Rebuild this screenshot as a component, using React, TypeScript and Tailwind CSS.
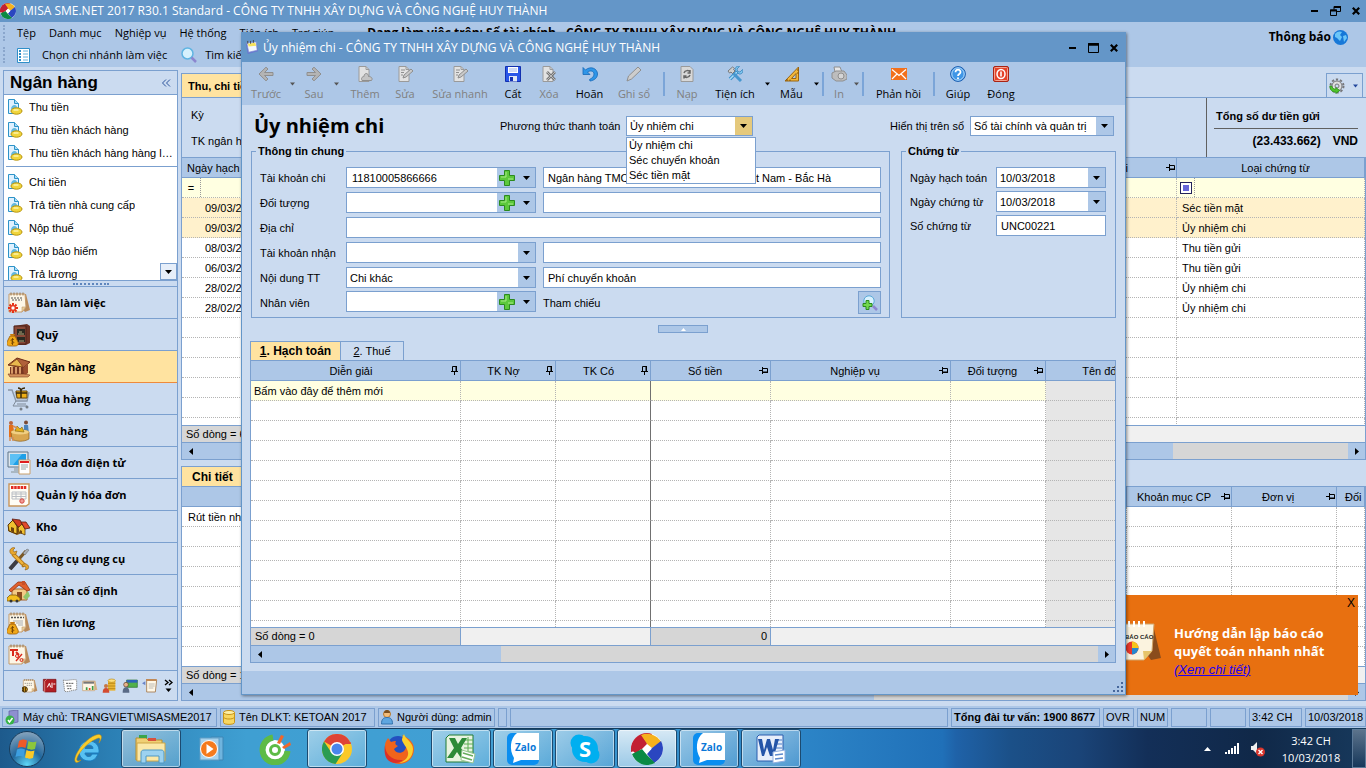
import type { ReactNode } from 'react'
import clsx from 'clsx'

/* ---------- shared icons ---------- */

function Caret({ className = 'text-black' }: { className?: string }) {
  return (
    <svg width="7" height="4" viewBox="0 0 7 4" className={className} aria-hidden="true">
      <path d="M0 0h7L3.5 4z" fill="currentColor" />
    </svg>
  )
}

function SideArrow({ flip = false }: { flip?: boolean }) {
  return (
    <svg width="4" height="7" viewBox="0 0 4 7" aria-hidden="true">
      <path d={flip ? 'M4 0v7L0 3.5z' : 'M0 0v7l4-3.5z'} fill="#000" />
    </svg>
  )
}

function Pin({ side = false }: { side?: boolean }) {
  return side ? (
    <svg width="9" height="7" viewBox="0 0 9 7" className="shrink-0" aria-hidden="true">
      <path d="M0 3.5h3M3.5 0v7M4 1.5h4.5v3.5H4M4 5.5h5" fill="none" stroke="#000" />
    </svg>
  ) : (
    <svg width="7" height="9" viewBox="0 0 7 9" className="shrink-0" aria-hidden="true">
      <path d="M1.5 5V.5h3.5V5M5.5 0v5M0 5.5h7M3.5 6v3" fill="none" stroke="#000" />
    </svg>
  )
}

function Logo({ size }: { size: number }) {
  return (
    <svg width={size} height={size} viewBox="0 0 32 32" aria-hidden="true">
      <circle cx="16" cy="16" r="16" fill="#fff" />
      <path d="M16 0A16 16 0 0 0 0 16l5 5L16 10l5-9A16 16 0 0 0 16 0z" fill="#c22033" />
      <path d="M10 2A16 16 0 0 1 30 9L21 15l-5-4z" fill="#f5b21d" />
      <path d="M30 8A16 16 0 0 1 23 30L16 21l5-6z" fill="#2a46c0" />
      <path d="M24 30A16 16 0 0 1 1 21l10-5 5 6z" fill="#0a8a44" />
      <path d="M10 3A16 16 0 0 0 0 19l11-3 5-5z" fill="#c22033" />
      <path d="m16 11.500 4.500 4.500-4.500 4.500-4.500-4.500z" fill="#fff" />
    </svg>
  )
}

function DocCoin() {
  return (
    <svg width="16" height="16" viewBox="0 0 16 16" className="shrink-0" aria-hidden="true">
      <path d="M1.500.5h6l4 4v10h-10z" fill="#dff1ff" stroke="#2d93c8" />
      <path d="M7.500.5v4h4" fill="#a9dcf5" stroke="#2d93c8" />
      <path d="M4 10.500c0-3 1.500-4.500 3.500-4.500S10 8 11 9.500z" fill="#63b8de" />
      <ellipse cx="9.500" cy="12" rx="5.500" ry="3.200" fill="#f0d53c" stroke="#b8940f" />
      <path d="M6.500 11h5" stroke="#fff7b0" strokeWidth="1.400" />
    </svg>
  )
}

function Plus({ size = 16 }: { size?: number }) {
  return (
    <svg width={size} height={size} viewBox="0 0 16 16" aria-hidden="true">
      <path d="M5.500.5h5v5h5v5h-5v5h-5v-5h-5v-5h5z" fill="#5cc83c" stroke="#2b8a1e" />
      <path d="M7 2v5H2M9 9h5" fill="none" stroke="#a6ea86" />
    </svg>
  )
}

/* ---------- navigation icons ---------- */

// calendar sheet with a curled corner, used as the base of several modules
function Sheet({ children }: { children?: ReactNode }) {
  return (
    <>
      <path d="M5 3h14l4 16-5 2z" fill="#b98a5a" />
      <path d="M2 3h16l1 13-4 5H2z" fill="#fdf6e6" stroke="#c39a6b" />
      <path d="M19 16h-4v5z" fill="#e9cf9c" stroke="#c39a6b" strokeWidth=".6" />
      <path d="M4 1.500v3M7 1.500v3M10 1.500v3M13 1.500v3M16 1.500v3" stroke="#9a7448" />
      {children}
    </>
  )
}

function MoneyBag() {
  return (
    <>
      <path d="M3 13h5l3 6c1 3-1 4-3 4H3c-2 0-4-1-3-4z" fill="#f0a818" stroke="#9a5c08" strokeWidth=".8" />
      <path d="M3 11h5l-1 2.500H4z" fill="#c67b10" />
      <path d="M7 16.500c-3-1-4 1.500-1.500 2s1 2.500-1.500 1.500M5.500 15v7" fill="none" stroke="#6b3c00" strokeWidth=".8" />
    </>
  )
}

const NAV_ART: Record<string, ReactNode> = {
  desk: (
    <Sheet>
      <path d="M4 7h12M5 9h10" stroke="#555" strokeWidth="1.200" strokeDasharray="2 1" />
      <path d="M6 12v10M1 17h10M2.500 13.500l7 7M9.500 13.500l-7 7" stroke="#e63216" strokeWidth="2" />
      <circle cx="6" cy="17" r="2.200" fill="#fff" stroke="#e63216" />
    </Sheet>
  ),
  safe: (
    <>
      <path d="m7 3 13-2 3 2v17l-4 2H7z" fill="#6c3325" />
      <path d="M7 3h12v18H7z" fill="#8a4a38" stroke="#4a2018" />
      <path d="M10 6h8v6h-8zM10 14h8v5h-8z" fill="#2b2a22" />
      <path d="M11 11h6M12 9h3M12 18h5" stroke="#b4a878" />
      <MoneyBag />
    </>
  ),
  bank: (
    <>
      <path d="m1 10 9-7 13 4-7 6z" fill="#b0603a" stroke="#6e2c17" />
      <path d="m2 10 8-6 6 8z" fill="#e8b84e" stroke="#8c4a20" />
      <path d="M3 12h14v7H3z" fill="#783722" />
      <path d="M5 12v7M9 12v7M13 12v7" stroke="#e3a570" strokeWidth="1.800" />
      <path d="m16 13 5-4v9l-4 3z" fill="#9a4c2e" />
      <path d="M1 19h16l6 1-2 2H3z" fill="#d5905c" stroke="#7b3b20" strokeWidth=".6" />
    </>
  ),
  cart: (
    <>
      <path d="M1 3h4l4 11h11l2-9" fill="none" stroke="#8a97a6" strokeWidth="1.400" />
      <path d="M8 5h13l-2 7h-9zM10 8h10M12 5v7M16 5v7" fill="none" stroke="#a5afba" />
      <path d="M9 4h11v7H10z" fill="#edae15" stroke="#6b4708" />
      <path d="M14 2v9M9 6h11M11 1c3 0 3 3 3 3s0-3 4-3" fill="none" stroke="#3a2a0a" strokeWidth="1.500" />
      <path d="M9 14 6 19h14M10 17h9" fill="none" stroke="#7e8a98" />
      <circle cx="14" cy="22" r="1.500" fill="#777f88" />
      <circle cx="20" cy="20" r="1.500" fill="#777f88" />
    </>
  ),
  sell: (
    <>
      <circle cx="4" cy="4" r="2" fill="#b9643c" />
      <path d="M2 6h4l2 12H2z" fill="#e46f1a" />
      <circle cx="19" cy="3.500" r="2" fill="#7b4a34" />
      <path d="M17 6h4l1 9h-5z" fill="#4a82bb" />
      <path d="M4 13c2-3 15-3 18 0v7c-5 3-13 3-17 0z" fill="#d8a650" stroke="#8e6320" strokeWidth=".7" />
      <ellipse cx="13" cy="13" rx="9" ry="2.500" fill="#f1cf82" />
      <path d="m8 12 2-5 3 3 2-2 2 5z" fill="#e3b11a" stroke="#7e6210" strokeWidth=".6" />
      <path d="M6 7l4 2M3 18v4M6 18v4" stroke="#d88c54" strokeWidth="1.500" />
    </>
  ),
  screen: (
    <>
      <path d="M1 1h20v15H1z" fill="#dce5ec" stroke="#5f7587" />
      <path d="M3 3h16v11H3z" fill="#1ea0e8" />
      <path d="M3 3h12L6 14H3z" fill="#5cc0f4" />
      <path d="M7 17h6v3h3v2H4v-2h3z" fill="#a9b7c2" />
      <path d="M12 9h11v14H12z" fill="#fff" stroke="#caa06a" />
      <path d="M13 11h9" stroke="#e02020" strokeWidth="2" />
      <path d="M14 14h7M14 16h7M14 18h5" stroke="#9aa" />
    </>
  ),
  invoice: (
    <>
      <path d="M2 1h20v20l-3 2H2z" fill="#fffdf5" stroke="#c9955a" strokeWidth="1.400" />
      <path d="M4 4.500h16" stroke="#e22c22" strokeWidth="3" strokeDasharray="2.500 .7" />
      <path d="M5 9h14v7H5zM5 11h14M5 13.500h14M9 9v7M14 9v7" fill="none" stroke="#b9bec4" />
      <circle cx="15" cy="18" r="2.200" fill="#f09a94" stroke="#d34a44" />
    </>
  ),
  stock: (
    <>
      <path d="m1 10 5-5 7 1 2 6v6l-5 2-9-4z" fill="#8a5a12" />
      <path d="m1 10 5-5 4 6v8l-8-3z" fill="#f0c030" stroke="#593508" />
      <path d="m5 4 8 1 3 6-5 1z" fill="#cf3c20" stroke="#5a1a0c" strokeWidth=".8" />
      <path d="m11 13 4-4 3 5v6l-6-3z" fill="#f0c030" stroke="#593508" strokeWidth=".8" />
      <path d="m14 7 5 0 4 6-5 1z" fill="#e14a2c" stroke="#5a1a0c" strokeWidth=".8" />
      <path d="M4 16v-4l3 1v5M13 18v-3l2 1v3" fill="#6e430c" />
    </>
  ),
  tools: (
    <>
      <path d="M3 22 19 4" stroke="#7c5a28" strokeWidth="3.200" />
      <path d="M3 22 10 14" stroke="#3c3c44" strokeWidth="4" />
      <path d="m16 6 4-4 2 1-4 5z" fill="#aab0b8" stroke="#666" strokeWidth=".5" />
      <path d="M6 7 18 19" stroke="#b37718" strokeWidth="4" />
      <path d="M6 7 18 19" stroke="#f0b43c" strokeWidth="2.400" />
      <path d="M3 3c-1 4 3 6 6 4l1-3-3 1-1-2 2-2C6 0 4 1 3 3zM21 22c2-3-1-6-5-5l-1 3 3-1 1 2-1 2z" fill="#e8a72e" stroke="#8b5c14" strokeWidth=".6" />
    </>
  ),
  asset: (
    <>
      <path d="M5 10h15v11H5z" fill="#f3c985" stroke="#a5622a" />
      <path d="M2 11 11 3h7l5 8-3 1-8-6-8 7z" fill="#e2602c" stroke="#963414" strokeWidth=".8" />
      <path d="M15 2h3v4h-3z" fill="#c8502a" />
      <path d="M10 13h5v8h-5z" fill="#8b4b1f" />
      <path d="M0 19l3-3h6l4 3v3H0z" fill="#f4bd1e" stroke="#7e5b10" strokeWidth=".8" />
      <circle cx="4" cy="22" r="1.500" fill="#333" />
      <circle cx="10" cy="22" r="1.500" fill="#333" />
      <path d="m16 18 5-6 2 5-4 4z" fill="#8fc66c" />
    </>
  ),
  wage: (
    <Sheet>
      <path d="M4 6.500h13" stroke="#555" strokeWidth="1.400" strokeDasharray="2 1" />
      <path d="M6 10h10M9 12h7M11 14h5" stroke="#a9aeb5" />
      <MoneyBag />
    </Sheet>
  ),
  tax: (
    <Sheet>
      <path d="M3 7h8M6 7v6M9 9l3 3" stroke="#d92a1c" strokeWidth="2" />
      <path d="m9 18 6-7" stroke="#d92a1c" strokeWidth="1.400" />
      <circle cx="10" cy="13" r="1.500" fill="none" stroke="#d92a1c" />
      <circle cx="14.500" cy="17" r="1.500" fill="none" stroke="#d92a1c" />
    </Sheet>
  ),
  bee: (
    <Sheet>
      <path d="M4 8h12M7 11h9" stroke="#777" strokeDasharray="2 1" />
      <circle cx="4" cy="17" r="4" fill="#e2a01c" stroke="#3b2a08" strokeWidth="1.500" />
      <path d="M2 14v6M5 14v6" stroke="#3b2a08" strokeWidth="1.500" />
    </Sheet>
  ),
  red: (
    <>
      <path d="M2 2h19v19H4l-2-2z" fill="#b11e24" stroke="#761216" />
      <path d="M4 21V5l3-3" fill="none" stroke="#e3b5a8" />
      <path d="M8 14l3-6 2 6M15 7v8M17 9h3" stroke="#fff" strokeWidth="1.500" fill="none" />
    </>
  ),
  list: (
    <>
      <path d="M2 3c6 2 14-2 20 0v15c-6-1-12 4-18 2z" fill="#fff" stroke="#8a8a8a" strokeWidth="1.400" strokeDasharray="2 1" />
      <path d="M6 8h12M7 12h8M8 16h6" stroke="#555" strokeWidth="1.500" strokeDasharray="3 1" />
    </>
  ),
  chart: (
    <>
      <path d="M2 4h18l3 14H4z" fill="#d6b286" />
      <path d="M1 5h18v14H1z" fill="#fdf6e6" stroke="#c39a6b" />
      <path d="M2 7h16" stroke="#777" strokeWidth="3" />
      <path d="M7 18v-4M16 18v-6" stroke="#3a9b48" strokeWidth="2.500" />
      <path d="M11.500 18v-3" stroke="#e24b26" strokeWidth="2.500" />
    </>
  ),
  coins: (
    <>
      <path d="M9 4h11v15H9z" fill="#eab534" />
      <path d="M9 8h11M9 12h11M9 16h11" stroke="#a7780e" />
      <ellipse cx="14.500" cy="4" rx="5.500" ry="2.500" fill="#ffe07a" stroke="#b98a1a" />
      <circle cx="6" cy="12" r="3" fill="#c77745" />
      <path d="M1 22c0-5 2-7 5-7s5 2 5 7z" fill="#d34b30" />
    </>
  ),
  shop: (
    <>
      <path d="M7 3h16v11H7z" fill="#52b04a" stroke="#27702a" />
      <path d="M7 5h16" stroke="#2d63b8" strokeWidth="4" />
      <circle cx="6" cy="10" r="3.500" fill="#e7b48c" stroke="#5b3a28" />
      <path d="M1 22c0-6 2-8 5-8s5 2 5 8z" fill="#596a86" />
    </>
  ),
  scroll: (
    <>
      <path d="M7 3h15l-2 18H7z" fill="#fff8e8" stroke="#a9825a" strokeWidth="1.400" />
      <path d="M6 3h16" stroke="#c08a58" strokeWidth="3" />
      <path d="M10 9h9M10 12h9M10 15h7" stroke="#9a9a9a" />
      <path d="m0 8 5-3v6z" fill="#6a84c8" />
    </>
  ),
}

function NavIcon({ art, size = 24 }: { art: string; size?: number }) {
  return (
    <svg width={size} height={size} viewBox="0 0 24 24" className="shrink-0" aria-hidden="true">
      {NAV_ART[art]}
    </svg>
  )
}

const TASKS_IN = ['Thu tiền', 'Thu tiền khách hàng', 'Thu tiền khách hàng hàng loạt']
const TASKS_OUT = ['Chi tiền', 'Trả tiền nhà cung cấp', 'Nộp thuế', 'Nộp bảo hiểm', 'Trả lương']

const MODULES = [
  { name: 'Bàn làm việc', art: 'desk' },
  { name: 'Quỹ', art: 'safe' },
  { name: 'Ngân hàng', art: 'bank', active: true },
  { name: 'Mua hàng', art: 'cart' },
  { name: 'Bán hàng', art: 'sell' },
  { name: 'Hóa đơn điện tử', art: 'screen' },
  { name: 'Quản lý hóa đơn', art: 'invoice' },
  { name: 'Kho', art: 'stock' },
  { name: 'Công cụ dụng cụ', art: 'tools' },
  { name: 'Tài sản cố định', art: 'asset' },
  { name: 'Tiền lương', art: 'wage' },
  { name: 'Thuế', art: 'tax' },
]

function TaskLink({ name }: { name: string }) {
  return (
    <li>
      <a href="#" className="flex h-[23px] items-center gap-1.5 pr-1 pl-[3px]">
        <DocCoin />
        <span className="truncate">{name}</span>
      </a>
    </li>
  )
}

function Sidebar() {
  return (
    <aside className="flex w-[175px] shrink-0 flex-col border border-[#7ba0cf] bg-[#cbdbf0]">
      <div className="flex h-6 shrink-0 items-center justify-between border-b border-[#7ba0cf] px-1.5">
        <h2 className="text-[17px] leading-6 font-bold">Ngân hàng</h2>
        <button aria-label="Thu gọn" className="text-[#2d559c]">
          <svg width="9" height="8" viewBox="0 0 9 8" aria-hidden="true">
            <path d="M4 .5.500 4 4 7.500M8 .5 4.500 4 8 7.500" fill="none" stroke="currentColor" />
          </svg>
        </button>
      </div>
      <div className="relative h-[185px] shrink-0 overflow-hidden bg-white">
        <ul>
          {TASKS_IN.map((t) => <TaskLink key={t} name={t} />)}
        </ul>
        <hr className="mt-0.5 mb-[3px] ml-0.5 border-[#7ba0cf]" />
        <ul>
          {TASKS_OUT.map((t) => <TaskLink key={t} name={t} />)}
        </ul>
        <button aria-label="Cuộn xuống" className="absolute right-0 bottom-0 flex h-[17px] w-[17px] items-center justify-center border border-[#7ba0cf] bg-[#e6eef9]">
          <Caret />
        </button>
      </div>
      <div className="flex h-[7px] shrink-0 items-center justify-center border-y border-[#7ba0cf]">
        <span className="w-9 border-t-2 border-dotted border-[#5f86bd]" />
      </div>
      <nav>
        {MODULES.map((m) => (
          <button
            key={m.name}
            className={clsx(
              'flex h-8 w-full items-center gap-[5px] border-b pl-[3px] text-left font-["Open_Sans",sans-serif] text-[11px] font-bold',
              m.active ? 'border-[#ee8a3c] bg-[#ffe3a0]' : 'border-[#7ba0cf]',
            )}
          >
            <NavIcon art={m.art} />
            {m.name}
          </button>
        ))}
      </nav>
      <div className="flex flex-1 items-center justify-end gap-1 pr-1">
        {['bee', 'red', 'list', 'chart', 'coins', 'shop', 'scroll'].map((art) => (
          <button key={art} aria-label={art}><NavIcon art={art} size={16} /></button>
        ))}
        <button aria-label="Thêm phân hệ" className="ml-0.5">
          <svg width="9" height="14" viewBox="0 0 9 14" aria-hidden="true">
            <path d="m1 1 3 2.500L1 6M5 1l3 2.500L5 6" fill="none" stroke="#000" strokeWidth="1.400" />
            <path d="M1.500 9.500h6l-3 3.500z" />
          </svg>
        </button>
      </div>
    </aside>
  )
}

/* ---------- main window ---------- */

function TitleButtons({ restore = false }: { restore?: boolean }) {
  return (
    <div className="ml-auto flex items-center gap-[11px]">
      <button aria-label="Thu nhỏ">
        <svg width="8" height="10" viewBox="0 0 8 10"><path d="M0 5h7" stroke="#000" strokeWidth="2" /></svg>
      </button>
      <button aria-label="Phóng to">
        {restore ? (
          <svg width="11" height="10" viewBox="0 0 11 10" fill="none" stroke="#000">
            <path d="M.5 4h6v5.500h-6zM4 3.500v-3h6.500v5H7" /><path d="M0 4.500h7M4 1h7" strokeWidth="2" />
          </svg>
        ) : (
          <svg width="11" height="10" viewBox="0 0 11 10" fill="none" stroke="#000">
            <path d="M.5.500h10v9H.5z" /><path d="M0 1.500h11" strokeWidth="2.500" />
          </svg>
        )}
      </button>
      <button aria-label="Đóng cửa sổ">
        <svg width="8" height="8" viewBox="0 0 8 8"><path d="m.8.8 6.400 6.400M7.200.8.8 7.200" stroke="#000" strokeWidth="2.200" /></svg>
      </button>
    </div>
  )
}

function Scrollbar({ thumb }: { thumb: string }) {
  return (
    <div className="flex h-[17px] shrink-0 items-center border-t border-[#7ba0cf] bg-[#d6d6d6]">
      <button aria-label="Cuộn trái" className="flex h-full w-[17px] shrink-0 items-center justify-center bg-[#adc7e7]">
        <SideArrow flip />
      </button>
      <span className={clsx('h-full bg-[#adc7e7]', thumb)} />
      <button aria-label="Cuộn phải" className="ml-auto flex h-full w-[17px] shrink-0 items-center justify-center bg-[#adc7e7]">
        <SideArrow />
      </button>
    </div>
  )
}

const VOUCHERS = [
  { date: '09/03/2018', type: 'Séc tiền mặt', marked: true },
  { date: '09/03/2018', type: 'Ủy nhiệm chi', marked: true },
  { date: '08/03/2018', type: 'Thu tiền gửi' },
  { date: '06/03/2018', type: 'Thu tiền gửi' },
  { date: '28/02/2018', type: 'Ủy nhiệm chi' },
  { date: '28/02/2018', type: 'Ủy nhiệm chi' },
  { date: '', type: '' },
  { date: '', type: '' },
  { date: '', type: '' },
  { date: '', type: '' },
  { date: '', type: '' },
  { date: '', type: '' },
]

const TH = 'h-5 border-r border-b border-[#7ba0cf] bg-[#adc7e7] p-0 font-normal'
const TD = 'h-5 border-r border-b border-dotted border-[#b4b4b4] p-0'

function VoucherTable() {
  return (
    <table className="w-full table-fixed border-separate border-spacing-0">
      <colgroup>
        <col className="w-[100px]" />
        <col />
        <col className="w-[140px]" />
        <col className="w-[188px]" />
      </colgroup>
      <thead>
        <tr>
          <th className={clsx(TH, 'pl-[5px] text-left whitespace-nowrap')}>Ngày hạch toán</th>
          <th className={TH} />
          <th className={TH}>
            <span className="flex items-center justify-end gap-[38px] pr-px">Lý do chi<Pin side /></span>
          </th>
          <th className={clsx(TH, 'pl-2.5')}>Loại chứng từ</th>
        </tr>
      </thead>
      <tbody>
        <tr className="bg-[#ffffe1]">
          <td className={TD}>
            <span className="flex h-[19px] w-[19px] items-center justify-center border-r border-dotted border-[#9a9a9a]">=</span>
          </td>
          <td className={TD} />
          <td className={TD} />
          <td className={TD}>
            <span className="flex h-[19px] w-[18px] items-center justify-center border-r border-dotted border-[#9a9a9a]">
              <span className="flex h-3 w-3 items-center justify-center border border-[#22225a] bg-white">
                <span className="h-1.5 w-1.5 bg-[#6666d8]" />
              </span>
            </span>
          </td>
        </tr>
        {VOUCHERS.map((v, i) => (
          <tr key={i} className={v.marked ? 'bg-[#fff1cc]' : 'bg-white'}>
            <td className={clsx(TD, 'pl-[23px]')}>{v.date}</td>
            <td className={TD} />
            <td className={TD} />
            <td className={clsx(TD, 'pl-[5px]')}>{v.type}</td>
          </tr>
        ))}
      </tbody>
    </table>
  )
}

function DetailTable() {
  return (
    <table className="w-full table-fixed border-separate border-spacing-0">
      <colgroup>
        <col className="w-[200px]" />
        <col />
        <col className="w-[105px]" />
        <col className="w-[105px]" />
        <col className="w-7" />
      </colgroup>
      <thead>
        <tr>
          <th className={TH} />
          <th className={TH} />
          <th className={TH}><span className="flex items-center justify-between pr-px pl-2.5">Khoản mục CP<Pin side /></span></th>
          <th className={TH}><span className="flex items-center justify-between pr-px pl-[30px]">Đơn vị<Pin side /></span></th>
          <th className={clsx(TH, 'pl-2 text-left')}>Đối</th>
        </tr>
      </thead>
      <tbody>
        {Array.from({ length: 9 }, (_, i) => (
          <tr key={i} className="bg-white">
            <td className={clsx(TD, 'pl-1.5')}>{i === 0 && 'Rút tiền nhập quỹ tiền mặt'}</td>
            <td className={TD} />
            <td className={TD} />
            <td className={TD} />
            <td className={TD} />
          </tr>
        ))}
      </tbody>
    </table>
  )
}

function Workspace() {
  return (
    <main className="flex min-w-0 flex-1 flex-col">
      <div className="mt-[3px] flex h-[25px] shrink-0 items-stretch border-b border-[#7ba0cf]">
        <button className="border-x border-t border-[#7ba0cf] bg-[#ffe3a0] px-1.5 font-bold">Thu, chi tiền</button>
        <button className="mr-[3px] ml-auto flex w-[37px] items-center gap-2 border-x border-t border-[#7ba0cf] pl-0.5" aria-label="Thiết lập">
          <svg width="16" height="16" viewBox="0 0 16 16" aria-hidden="true">
            <circle cx="8" cy="8" r="6.500" fill="none" stroke="#77777a" strokeWidth="2" strokeDasharray="2.300 1.800" />
            <circle cx="8" cy="8" r="5" fill="#dedfe0" stroke="#77777a" />
            <circle cx="8" cy="8" r="2" fill="#cbdbf0" stroke="#77777a" />
            <path d="M.8 8c0 4 3 6.500 6 6v1.500l4-3-4-3V11c-2 .5-3.500-1-4-3z" fill="#4fc42c" stroke="#278a14" strokeWidth=".7" />
          </svg>
          <Caret className="w-[5px] text-[#22479c]" />
        </button>
      </div>
      <div className="flex h-[59px] shrink-0 border-l border-[#7ba0cf]">
        <div className="flex flex-1 flex-col justify-center gap-2.5 pl-[9px]">
          <span>Kỳ</span>
          <span>TK ngân hàng</span>
        </div>
        <div className="w-40 border-l border-[#606060] pt-2.5 pr-2 pl-[7px] font-bold">
          <p className="border-b border-[#606060] pb-1 pl-0.5">Tổng số dư tiền gửi</p>
          <p className="flex justify-end gap-3 pt-1 text-[12px] leading-4"><span>(23.433.662)</span><span>VND</span></p>
        </div>
      </div>
      <section className="flex h-[303px] shrink-0 flex-col border border-[#7ba0cf]">
        <div className="flex-1 overflow-hidden bg-white"><VoucherTable /></div>
        <div className="flex h-[17px] shrink-0 items-center border-t border-[#7ba0cf] bg-[#f0f0f0]">
          <span className="h-full w-24 bg-[#d6d6d6] pl-1">Số dòng = 6</span>
        </div>
        <Scrollbar thumb="w-[974px]" />
      </section>
      <div className="mt-1.5 flex h-5 shrink-0">
        <button className="border-x border-t border-[#7ba0cf] bg-[#ffe3a0] px-2.5 text-[12px] font-bold">Chi tiết</button>
      </div>
      <section className="flex min-h-0 flex-1 flex-col border border-[#7ba0cf]">
        <div className="flex-1 overflow-hidden bg-white"><DetailTable /></div>
        <div className="flex h-[17px] shrink-0 items-center border-t border-[#7ba0cf] bg-[#f0f0f0]">
          <span className="h-full w-24 bg-[#d6d6d6] pl-1">Số dòng = 1</span>
        </div>
        <Scrollbar thumb="w-[675px]" />
      </section>
    </main>
  )
}

/* ---------- voucher dialog ---------- */

const GRAY = '#8f8f8f'

function DocBase({ children }: { children: ReactNode }) {
  return (
    <>
      <path d="M2 .5h7l3 3v12H2z" fill="#e2e2e2" stroke="#9a9a9a" />
      <path d="M9 .5v3h3" fill="none" stroke="#9a9a9a" />
      {children}
    </>
  )
}

const TOOL_ART: Record<string, ReactNode> = {
  prev: <path d="M15 6.500H6.500L10 3 8 1.200 1 8l7 6.800L10 13 6.500 9.500H15z" fill="#b4b4b4" stroke={GRAY} />,
  next: <path d="M1 6.500h8.500L6 3l2-1.800L15 8l-7 6.800L6 13l3.500-3.500H1z" fill="#b4b4b4" stroke={GRAY} />,
  add: <DocBase><path d="M5 14.500c-1.500-3 1-4 2-4 0-4 4.500-4 4.500 0 3 0 4.500 2 3 4z" fill="#c4c4c4" stroke={GRAY} /></DocBase>,
  edit: <DocBase><path d="m6 12 1-3 7-6 2 2-7 6z" fill="#c9c9c9" stroke={GRAY} /><path d="M4 4h4M4 6.500h3M4 9h2" stroke={GRAY} /></DocBase>,
  save: (
    <>
      <path d="M.5.500h15v15H.5z" fill="#2956e8" stroke="#1230b0" />
      <path d="M3 1h10v6H3z" fill="#fff" />
      <path d="M4 3h8M4 5h8" stroke="#9fb4ea" />
      <path d="M4 10h8v5.500H4z" fill="#dfe6f5" />
      <path d="M5 11h3v4H5z" fill="#1230b0" />
    </>
  ),
  remove: <DocBase><path d="m6 6 8 8M14 6l-8 8" stroke="#777" strokeWidth="2.600" /><path d="m6 6 8 8M14 6l-8 8" stroke="#bbb" /></DocBase>,
  undo: (
    <path d="M1 1.500v7h7L5.500 6c3-2 6.500-1 6.500 2s-2 4-4.500 5.500L8 15c4-.5 7.500-3 7.500-7C15.500 2.500 8.500-.5 3.500 4z" fill="#2f96e8" stroke="#1668b8" strokeWidth=".8" />
  ),
  pencil: <path d="m1 15 1.500-5 9.500-9 3 3-9.500 9z" fill="#cdcdcd" stroke={GRAY} />,
  reload: (
    <>
      <path d="M2 .5h9l3 3v12H2z" fill="#d8d8d8" stroke="#9a9a9a" />
      <path d="M5 7c1-3 5-3 6-1M11 4v3H8.500M11 9c-1 3-5 3-6 1M5 12.500V10h2.500" fill="none" stroke="#666" strokeWidth="1.500" />
    </>
  ),
  utils: (
    <>
      <path d="m3 13 8-8" stroke="#3a8fcb" strokeWidth="3.500" />
      <path d="m3 13 8-8" stroke="#a9dcf7" strokeWidth="1.600" />
      <path d="M15.500 3.500 13 6l-2.500-.5L10 3 12.500.5C9.500-.5 7.500 2 8.500 4.500L12 8c3 .5 4.500-2 3.500-4.500z" fill="#7ec4ee" stroke="#2e7db5" strokeWidth=".7" />
      <path d="m6 7 8 8" stroke="#4797cf" strokeWidth="3" />
      <path d="M1 5 5.500 1l2 1.500-1 1L8 5 5.500 7.500 4 6 2.500 7z" fill="#cfcfcf" stroke="#666" strokeWidth=".8" />
    </>
  ),
  ruler: (
    <>
      <path d="M1 15 14.500 1v14z" fill="#f2b73b" stroke="#9a6410" />
      <path d="m7.500 12.500 4.500-5v5z" fill="#adc7e7" stroke="#9a6410" />
      <path d="M3 15v-2M6 15v-1.500M13 4h1.500M13 7h1.500" stroke="#7a4c08" />
    </>
  ),
  print: (
    <>
      <path d="M3 1h6l2 5H4z" fill="#e6e6e6" stroke={GRAY} />
      <path d="m1 7 4-2h8l3 4v4l-4 2H5l-4-3z" fill="#bdbdbd" stroke={GRAY} />
      <circle cx="10" cy="10" r="3" fill="#d5d5d5" stroke={GRAY} />
    </>
  ),
  mail: (
    <>
      <path d="M0 2h16v12H0z" fill="#f2701c" />
      <path d="m1 3.500 7 6 7-6M1 13l5-5M15 13l-5-5" fill="none" stroke="#fff" strokeWidth="1.200" />
    </>
  ),
  help: (
    <>
      <circle cx="8" cy="8" r="7.400" fill="#3f96e6" stroke="#1b5cae" />
      <circle cx="8" cy="8" r="6.200" fill="none" stroke="#b8dcfa" />
      <path d="M5.500 6.200c0-3.500 5.200-3.200 5 0C10.400 8 8 8 8 10" fill="none" stroke="#fff" strokeWidth="1.800" />
      <circle cx="8" cy="12.200" r="1" fill="#fff" />
    </>
  ),
  exit: (
    <>
      <rect x=".5" y=".5" width="15" height="15" rx="1.500" fill="#e4432a" stroke="#a82314" />
      <rect x="1.500" y="1.500" width="13" height="13" rx="1" fill="none" stroke="#f3a391" />
      <ellipse cx="8" cy="8" rx="4" ry="4.500" fill="none" stroke="#fff" strokeWidth="1.500" />
      <path d="M8 5.500v5" stroke="#fff" strokeWidth="1.600" />
    </>
  ),
}

interface Tool {
  label: string
  art: string
  width: string
  off?: boolean
  menu?: boolean
  sep?: boolean
}

const TOOLS: Tool[] = [
  { label: 'Trước', art: 'prev', width: 'w-11', off: true, menu: true },
  { label: 'Sau', art: 'next', width: 'w-9', off: true, menu: true },
  { label: 'Thêm', art: 'add', width: 'w-[50px]', off: true },
  { label: 'Sửa', art: 'edit', width: 'w-[30px]', off: true },
  { label: 'Sửa nhanh', art: 'edit', width: 'w-20', off: true },
  { label: 'Cất', art: 'save', width: 'w-[26px]' },
  { label: 'Xóa', art: 'remove', width: 'w-[46px]', off: true },
  { label: 'Hoãn', art: 'undo', width: 'w-[35px]' },
  { label: 'Ghi sổ', art: 'pencil', width: 'w-[54px]', off: true, sep: true },
  { label: 'Nạp', art: 'reload', width: 'w-10', off: true },
  { label: 'Tiện ích', art: 'utils', width: 'w-14', menu: true },
  { label: 'Mẫu', art: 'ruler', width: 'w-[41px]', menu: true, sep: true },
  { label: 'In', art: 'print', width: 'w-[26px]', off: true, menu: true, sep: true },
  { label: 'Phản hồi', art: 'mail', width: 'w-[65px]', sep: true },
  { label: 'Giúp', art: 'help', width: 'w-[42px]' },
  { label: 'Đóng', art: 'exit', width: 'w-11' },
]

function Toolbar() {
  return (
    <div className="flex h-[43px] shrink-0 items-center bg-[#adc7e7] pl-0.5 font-['Open_Sans',sans-serif]">
      {TOOLS.map((t) => (
        <div key={t.label} className="flex shrink-0 items-center">
          <button disabled={t.off} className={clsx('flex flex-col items-center gap-1 whitespace-nowrap', t.width, t.off ? 'text-[#808080]' : 'text-black')}>
            <svg width="16" height="16" viewBox="0 0 16 16" aria-hidden="true">{TOOL_ART[t.art]}</svg>
            <span>{t.label}</span>
          </button>
          {t.menu && (
            <button disabled={t.off} aria-label={`Chọn ${t.label}`} className="flex w-2 justify-center">
              <Caret className={clsx('w-[5px]', t.off ? 'text-[#555]' : 'text-black')} />
            </button>
          )}
          {t.sep && <span className="mx-0.5 h-6 w-0.5 bg-[#7ba5d8]" />}
        </div>
      ))}
    </div>
  )
}

const BOX = 'border border-[#7ba0cf] bg-white'

interface SelectProps {
  id: string
  options: string[]
  className?: string
  gold?: boolean
}

function Select({ id, options, className, gold }: SelectProps) {
  return (
    <div className={clsx('relative', className)}>
      <select id={id} className={clsx(BOX, 'h-full w-full appearance-none pr-[18px] pl-[3px]')}>
        {options.map((o) => <option key={o}>{o}</option>)}
      </select>
      <span className={clsx('pointer-events-none absolute inset-y-px right-px flex w-[17px] items-center justify-center', gold ? 'bg-[#e5c97c]' : 'bg-[#adc7e7]')}>
        <Caret />
      </span>
    </div>
  )
}

function LookupBox({ id, value = '' }: { id: string; value?: string }) {
  return (
    <div className={clsx(BOX, 'flex h-[21px] w-[190px] shrink-0')}>
      <input id={id} defaultValue={value} className="min-w-0 flex-1 pl-[5px] outline-none" />
      <button aria-label="Thêm nhanh" className="flex w-5 items-center justify-center bg-[#adc7e7]"><Plus /></button>
      <button aria-label="Mở danh sách" className="flex w-[18px] items-center justify-center bg-[#adc7e7]"><Caret /></button>
    </div>
  )
}

function Row({ id, label, children }: { id: string; label: string; children: ReactNode }) {
  return (
    <div className="flex h-[21px] items-center">
      <label htmlFor={id} className="w-[86px] shrink-0">{label}</label>
      <div className="flex min-w-0 flex-1 gap-[7px]">{children}</div>
    </div>
  )
}

const WIDE = clsx(BOX, 'h-[21px] min-w-0 flex-1 px-1 outline-none')

function GeneralInfo() {
  return (
    <fieldset className="min-w-0 flex-1 border border-[#7ba0cf] pr-2 pl-2">
      <legend className="-ml-1 px-0.5 font-bold">Thông tin chung</legend>
      <div className="mt-2 flex flex-col gap-1">
        <Row id="account" label="Tài khoản chi">
          <LookupBox id="account" value="11810005866666" />
          <input aria-label="Tên ngân hàng" defaultValue="Ngân hàng TMCP Đầu tư và Phát triển Việt Nam - Bắc Hà" className={WIDE} />
        </Row>
        <Row id="partner" label="Đối tượng">
          <LookupBox id="partner" />
          <input aria-label="Tên đối tượng" className={WIDE} />
        </Row>
        <Row id="address" label="Địa chỉ">
          <input id="address" className={WIDE} />
        </Row>
        <Row id="receiver" label="Tài khoản nhận">
          <Select id="receiver" options={['']} className="h-[21px] w-[190px] shrink-0" />
          <input aria-label="Ngân hàng nhận" className={WIDE} />
        </Row>
        <Row id="content" label="Nội dung TT">
          <Select id="content" options={['Chi khác']} className="h-[21px] w-[190px] shrink-0" />
          <input aria-label="Diễn giải nội dung" defaultValue="Phí chuyển khoản" className={WIDE} />
        </Row>
        <Row id="staff" label="Nhân viên">
          <LookupBox id="staff" />
          <span className="flex flex-1 items-center justify-between">
            Tham chiếu
            <button aria-label="Chọn tham chiếu" className="flex h-[23px] w-[23px] items-center justify-center border border-[#7ba0cf] bg-[#adc7e7]">
              <svg width="16" height="16" viewBox="0 0 16 16" aria-hidden="true">
                <circle cx="7" cy="6" r="5.200" fill="#d8f1fd" stroke="#5aa9d8" />
                <path d="m11 11 4 4" stroke="#8c86cf" strokeWidth="2.500" />
                <path d="M4 5.500h3v3h3v3H7v3H4v-3H1v-3h3z" fill="#72d84e" stroke="#2b8a1e" />
              </svg>
            </button>
          </span>
        </Row>
      </div>
    </fieldset>
  )
}

function VoucherInfo() {
  return (
    <fieldset className="w-[215px] min-w-0 shrink-0 border border-[#7ba0cf] pr-[9px] pl-2">
      <legend className="-ml-1 px-0.5 font-bold">Chứng từ</legend>
      <div className="mt-2 flex flex-col gap-[3px]">
        <Row id="posted" label="Ngày hạch toán"><Select id="posted" options={['10/03/2018']} className="h-[21px] flex-1" /></Row>
        <Row id="dated" label="Ngày chứng từ"><Select id="dated" options={['10/03/2018']} className="h-[21px] flex-1" /></Row>
        <Row id="number" label="Số chứng từ"><input id="number" defaultValue="UNC00221" className={WIDE} /></Row>
      </div>
    </fieldset>
  )
}

const ENTRY_COLUMNS = [
  { name: 'Diễn giải', width: 'w-[210px]', pin: 'top' },
  { name: 'TK Nợ', width: 'w-[95px]', pin: 'top' },
  { name: 'TK Có', width: 'w-[95px]', pin: 'top' },
  { name: 'Số tiền', width: 'w-[120px]', pin: 'side' },
  { name: 'Nghiệp vụ', width: 'w-[180px]', pin: 'side' },
  { name: 'Đối tượng', width: 'w-[95px]', pin: 'side' },
  { name: 'Tên đối tượng', width: 'w-[145px]', pin: '' },
]

function EntryTable() {
  return (
    <table className="w-[940px] table-fixed border-separate border-spacing-0">
      <colgroup>
        {ENTRY_COLUMNS.map((c) => <col key={c.name} className={c.width} />)}
      </colgroup>
      <thead>
        <tr>
          {ENTRY_COLUMNS.map((c) => (
            <th key={c.name} className={TH}>
              <span className="flex items-center pr-0.5">
                <span className="flex-1">{c.name}</span>
                {c.pin && <Pin side={c.pin === 'side'} />}
              </span>
            </th>
          ))}
        </tr>
      </thead>
      <tbody>
        {Array.from({ length: 13 }, (_, row) => (
          <tr key={row} className={row === 0 ? 'bg-[#ffffe1]' : 'bg-white'}>
            {ENTRY_COLUMNS.map((c, i) => (
              <td
                key={c.name}
                className={clsx(
                  'h-5 border-r border-b border-b-[#b4b4b4] p-0 [border-bottom-style:dotted]',
                  i === 2 ? 'border-r-[#707070]' : 'border-r-[#b4b4b4] [border-right-style:dotted]',
                  i === 6 && 'bg-[#e6e6e6]',
                )}
              >
                {row === 0 && i === 0 && <span className="pl-[3px]">Bấm vào đây để thêm mới</span>}
              </td>
            ))}
          </tr>
        ))}
      </tbody>
    </table>
  )
}

function DialogWindow() {
  return (
    <div className="absolute top-8 right-[240px] bottom-[73px] left-[241px] z-20 flex flex-col border border-[#6496c8] bg-[#cbdbf0] shadow-[1px_1px_3px_rgba(0,0,0,0.45)]">
      <header className="flex h-[29px] shrink-0 items-center gap-1 bg-[#6496c8] pr-[7px] pl-0.5 font-['Open_Sans',sans-serif] text-[12px] text-white">
        <svg width="15" height="15" viewBox="0 0 16 16" aria-hidden="true">
          <path d="m2 4 11-2 2 10-11 3z" fill="#6876d0" />
          <path d="m3 3 10-1 1 9-9 2z" fill="#f3f8fd" stroke="#7a8ad0" strokeWidth=".7" />
          <path d="m4 4 8-1 1 3-8 1z" fill="#f5e25a" />
          <path d="M4 1v3M7 1v3M10 0v3" stroke="#444" />
        </svg>
        <h1>Ủy nhiệm chi - CÔNG TY TNHH XÂY DỰNG VÀ CÔNG NGHỆ HUY THÀNH</h1>
        <TitleButtons />
      </header>
      <Toolbar />
      <div className="flex min-h-0 flex-1 flex-col pt-1 pr-[9px] pl-2">
        <div className="flex h-[34px] shrink-0 items-center">
          <h2 className="w-[250px] pl-1 font-['Open_Sans',sans-serif] text-[20px] leading-7 font-bold">Ủy nhiệm chi</h2>
          <label htmlFor="method" className="w-[126px]">Phương thức thanh toán</label>
          <div className="relative">
            <Select id="method" options={['Ủy nhiệm chi', 'Séc chuyển khoản', 'Séc tiền mặt']} className="h-5 w-[127px]" gold />
            <ul className="absolute top-[21px] left-0 z-10 w-[130px] border border-[#7ba0cf] bg-white px-0.5 leading-[15px]">
              <li>Ủy nhiệm chi</li>
              <li>Séc chuyển khoản</li>
              <li>Séc tiền mặt</li>
            </ul>
          </div>
          <label htmlFor="book" className="ml-auto pr-1.5">Hiển thị trên sổ</label>
          <Select id="book" options={['Sổ tài chính và quản trị']} className="mr-0.5 h-5 w-36" />
        </div>
        <div className="flex h-[175px] shrink-0 gap-[11px] pl-px">
          <GeneralInfo />
          <VoucherInfo />
        </div>
        <button aria-label="Thu gọn thông tin" className="mx-auto mt-[7px] flex h-2 w-[50px] shrink-0 items-center justify-center border border-[#7ba0cf] bg-[#adc7e7]">
          <svg width="5" height="3" viewBox="0 0 5 3" aria-hidden="true"><path d="M0 3h5L2.500 0z" fill="#fff" /></svg>
        </button>
        <div role="tablist" className="mt-2 flex h-[19px] shrink-0">
          <button role="tab" className="w-[91px] border-x border-t border-[#7ba0cf] bg-[#ffe3a0] text-[12px] font-bold"><u>1</u>. Hạch toán</button>
          <button role="tab" className="w-[63px] border-t border-r border-[#7ba0cf]"><u>2</u>. Thuế</button>
        </div>
        <section className="flex min-h-0 flex-1 flex-col border border-[#7ba0cf]">
          <div className="min-h-0 flex-1 overflow-hidden bg-white"><EntryTable /></div>
          <div className="flex h-[18px] shrink-0 border-t border-[#7ba0cf] bg-[#f0f0f0]">
            <span className="w-[210px] border-r border-[#7ba0cf] bg-[#d6d6d6] pl-1">Số dòng = 0</span>
            <span className="w-[190px] border-r border-[#7ba0cf]" />
            <span className="w-[120px] border-r border-[#7ba0cf] bg-[#d6d6d6] pr-[3px] text-right">0</span>
          </div>
          <Scrollbar thumb="w-[233px]" />
        </section>
        <div className="h-2 shrink-0" />
      </div>
      <footer className="flex h-[23px] shrink-0 items-end justify-end bg-[#adc7e7] p-px">
        <svg width="11" height="11" viewBox="0 0 11 11" aria-hidden="true">
          <path d="M8 0h2v2H8zM8 4h2v2H8zM4 4h2v2H4zM8 8h2v2H8zM4 8h2v2H4zM0 8h2v2H0z" fill="#46679c" />
        </svg>
      </footer>
    </div>
  )
}

/* ---------- notice, status bar, taskbar ---------- */

function Notice() {
  return (
    <div className="absolute right-2 bottom-[73px] z-10 h-[100px] w-64 bg-[#e87010] text-white">
      <button aria-label="Đóng thông báo" className="absolute top-0 right-[3px] text-[12px] leading-4 text-black">X</button>
      <svg width="44" height="46" viewBox="0 0 44 46" className="absolute top-6 left-4" aria-hidden="true">
        <path d="M8 6h27l8 33-10 2z" fill="#8a4c1c" />
        <path d="M2 5h34l-2 27-8 9H0z" fill="#fbf3df" stroke="#d2a468" />
        <path d="m34 32-8 9-1-9z" fill="#e6c46a" />
        <path d="M6 2v6M11 2v6M16 2v6M21 2v6M26 2v6" stroke="#fff" strokeWidth="2" />
        <text x="7" y="20" fontFamily="Liberation Sans, sans-serif" fontSize="6" fontWeight="700" fill="#222">BÁO CÁO</text>
        <circle cx="14" cy="29" r="6.500" fill="#e8382c" />
        <path d="M14 29v-6.500a6.500 6.500 0 0 1 6.500 6.500z" fill="#f6c51b" />
        <path d="M14 29h6.500a6.500 6.500 0 0 1-6.500 6.500z" fill="#2787cf" />
      </svg>
      <div className="pt-[29px] pl-[72px] font-['Open_Sans',sans-serif] text-[13px] leading-[18px] font-bold">
        <p>Hướng dẫn lập báo cáo</p>
        <p>quyết toán nhanh nhất</p>
        <a href="#" className="font-['Liberation_Sans',sans-serif] leading-5 font-normal text-[#2100f0] italic underline">(Xem chi tiết)</a>
      </div>
    </div>
  )
}

const CELL = 'flex h-[19px] shrink-0 items-center gap-1 overflow-hidden border border-[#7ba0cf] px-0.5 whitespace-nowrap'

function StatusBar() {
  return (
    <footer className="flex h-[22px] shrink-0 items-center gap-[3px] bg-[#adc7e7] pl-0.5">
      <span className={clsx(CELL, 'w-[215px]')}>
        <svg width="14" height="15" viewBox="0 0 14 15" aria-hidden="true">
          <path d="M4 1l9-1v12l-9 2z" fill="#8e8fd0" stroke="#5e5fa0" strokeWidth=".7" />
          <circle cx="5" cy="10" r="4.500" fill="#36b346" />
          <path d="m3 10 1.500 2L7.500 8" fill="none" stroke="#fff" strokeWidth="1.500" />
        </svg>
        Máy chủ: TRANGVIET\MISASME2017
      </span>
      <span className={clsx(CELL, 'w-[155px]')}>
        <svg width="12" height="15" viewBox="0 0 12 15" aria-hidden="true">
          <path d="M.5 2.500v10c0 2.500 11 2.500 11 0v-10" fill="#f8d760" stroke="#c79318" />
          <ellipse cx="6" cy="2.500" rx="5.500" ry="2" fill="#fff0a6" stroke="#c79318" />
          <path d="M1 7.500c1 2 9 2 10 0" fill="none" stroke="#c79318" />
        </svg>
        Tên DLKT: KETOAN 2017
      </span>
      <span className={clsx(CELL, 'w-[117px]')}>
        <svg width="12" height="15" viewBox="0 0 12 15" aria-hidden="true">
          <circle cx="6" cy="4" r="3.500" fill="#f3bd7a" stroke="#b57930" />
          <path d="M3 3c0-4 6-4 6 0z" fill="#7a5020" />
          <path d="M.5 14c0-5 2-6.500 5.500-6.500s5.500 1.500 5.500 6.500z" fill="#5ea6e0" stroke="#3472ac" />
        </svg>
        Người dùng: admin
      </span>
      <span className={clsx(CELL, 'w-[9px]')} />
      <span className={clsx(CELL, 'min-w-0 flex-1')} />
      <span className={clsx(CELL, 'w-[149px] font-bold')}>Tổng đài tư vấn: 1900 8677</span>
      <span className={clsx(CELL, 'w-[31px]')}>OVR</span>
      <span className={clsx(CELL, 'w-[31px]')}>NUM</span>
      <span className={clsx(CELL, 'w-9')} />
      <span className={clsx(CELL, 'w-9')} />
      <span className={clsx(CELL, 'w-[53px]')}>3:42 CH</span>
      <span className={clsx(CELL, 'w-[61px]')}>10/03/2018</span>
    </footer>
  )
}

const ZaloMark = (
  <svg width="32" height="32" viewBox="0 0 32 32" aria-hidden="true">
    <rect width="32" height="32" rx="5" fill="#0a8ef0" />
    <path d="M10 0h22v27H14l-8 3 1-5C2 17 3 5 10 0z" fill="#fff" />
    <text x="8" y="18" fontFamily="Open Sans, sans-serif" fontSize="10" fontWeight="700" fill="#0a78d8">Zalo</text>
  </svg>
)

const TASKBAR: { name: string; framed?: boolean; active?: boolean; icon: ReactNode }[] = [
  {
    name: 'Internet Explorer',
    icon: (
      <svg width="32" height="32" viewBox="0 0 32 32" aria-hidden="true">
        <path d="M25 21c-2 5-5 7-9 7-6 0-10-4-10-10S10 8 16 8s11 4 10 12H12c0 4 6 5 7 1zM12 15.500h8c0-4.500-8-4.500-8 0z" fill="#57c0f2" stroke="#1a7cc0" />
        <path d="M8 27c-4 4-7 3-6-2C4 17 14 5 23 2c6-2 7 2 3 8 2-5 1-6-3-4C15 9 6 19 4 25c-1 3 1 4 4 2z" fill="#f8cc2c" stroke="#c48c0c" strokeWidth=".5" />
      </svg>
    ),
  },
  {
    name: 'Explorer',
    framed: true,
    icon: (
      <svg width="34" height="32" viewBox="0 0 34 32" aria-hidden="true">
        <path d="M2 5h10l2 2h14v20H2z" fill="#f0cf74" stroke="#b88e2c" />
        <path d="M5 2h8v3H5z" fill="#3aa54a" /><path d="M14 5h8v3h-8z" fill="#d9513c" />
        <path d="M3 10h28v18H3z" fill="#fbe8a8" stroke="#cda647" />
        <path d="M7 30V20c0-2 1-3 3-3h17c2 0 3 1 3 3v10h-5v-7H12v7z" fill="#9cd2f0" stroke="#4f98c4" />
      </svg>
    ),
  },
  {
    name: 'Media Player',
    icon: (
      <svg width="30" height="28" viewBox="0 0 30 28" aria-hidden="true">
        <path d="M13 2h12v23H13z" fill="#6fb4de" stroke="#3f86b5" /><path d="M2 3h19v22H2z" fill="#a8d2ec" stroke="#5f9cc4" />
        <circle cx="11" cy="14" r="8.500" fill="#f57a1c" stroke="#fff" />
        <path d="M8.500 9v10l7-5z" fill="#fff" />
      </svg>
    ),
  },
  {
    name: 'Cốc Cốc',
    icon: (
      <svg width="32" height="32" viewBox="0 0 32 32" aria-hidden="true">
        <circle cx="16" cy="17" r="10" fill="#fff" />
        <path d="M14 4.500A12.500 12.500 0 1 0 28.500 18" fill="none" stroke="#5dbb46" strokeWidth="6" />
        <circle cx="16" cy="17" r="4.500" fill="#fff" stroke="#5dbb46" strokeWidth="3" />
        <path d="m18 10 4-8 3 1-4 8zM23 14l8-5 1 3-7 4z" fill="#f2672a" />
      </svg>
    ),
  },
  {
    name: 'Chrome',
    framed: true,
    icon: (
      <svg width="30" height="30" viewBox="0 0 30 30" aria-hidden="true">
        <circle cx="15" cy="15" r="15" fill="#fbc927" />
        <path d="M15 15 2 7.500A15 15 0 0 1 28 7.500z" fill="#de4436" />
        <path d="M2 7.500A15 15 0 0 0 13.500 30L21 18.500 9 18z" fill="#2a9c52" />
        <path d="M15 8h13.500l.5 2H17z" fill="#de4436" />
        <circle cx="15" cy="15" r="7" fill="#fff" /><circle cx="15" cy="15" r="5.500" fill="#4a86ec" />
      </svg>
    ),
  },
  {
    name: 'Firefox',
    icon: (
      <svg width="32" height="32" viewBox="0 0 32 32" aria-hidden="true">
        <circle cx="15" cy="14" r="11" fill="#2350c0" />
        <path d="M2 12c0-3 2-5 3-7l3 4c2-1 4-1 5-1-1 2-1 4 2 5l-4 3c1 4 7 5 10 2 4-4 2-10-2-16 9 4 12 9 12 14 0 9-7 15-15 15S1 24 2 12z" fill="#f0641c" />
        <path d="M21 1c1 5 9 8 9 15 0 9-7 14-14 14 6-2 10-6 9-11-1-5-5-8-6-12 0-2 1-4 2-6z" fill="#fcd02c" />
        <path d="M2 12c0 9 7 16 18 15-4 4-12 4-16-1-2-3-3-8-2-14z" fill="#dd3028" />
      </svg>
    ),
  },
  {
    name: 'Excel',
    framed: true,
    icon: (
      <svg width="32" height="32" viewBox="0 0 32 32" aria-hidden="true">
        <path d="M4 2h24v27H1V5z" fill="#e7f3df" stroke="#1f7a34" />
        <path d="M19 7h9M19 11h9M19 15h9M19 19h9M23 4v16" stroke="#5cae52" />
        <path d="M4 5h6l3 6 4-6h5l-6 10 6 10h-6l-4-6-4 6H2l7-10z" fill="#2d8a38" />
        <path d="m17 17 13 4-2 9-12-3z" fill="#fff" stroke="#9ac890" /><path d="m18 20 10 3M17 24l10 3" stroke="#68ad5c" strokeWidth="1.500" />
      </svg>
    ),
  },
  { name: 'Zalo', framed: true, icon: ZaloMark },
  {
    name: 'Skype',
    framed: true,
    icon: (
      <svg width="30" height="30" viewBox="0 0 30 30" aria-hidden="true">
        <circle cx="9" cy="9" r="8.500" fill="#00aff0" /><circle cx="21" cy="21" r="8.500" fill="#00aff0" /><circle cx="15" cy="15" r="13" fill="#00aff0" />
        <text x="15" y="23" textAnchor="middle" fontFamily="Open Sans, sans-serif" fontSize="22" fontWeight="700" fill="#fff">S</text>
      </svg>
    ),
  },
  { name: 'MISA SME.NET', framed: true, active: true, icon: <Logo size={32} /> },
  { name: 'Zalo 2', framed: true, icon: ZaloMark },
  {
    name: 'Word',
    framed: true,
    icon: (
      <svg width="32" height="32" viewBox="0 0 32 32" aria-hidden="true">
        <path d="M4 2h24v26H2V4z" fill="#e6eefa" stroke="#2b5cae" />
        <path d="M20 7h7M20 11h7M20 15h7" stroke="#7da3d8" strokeWidth="1.500" />
        <path d="M3 6h4l2 11 3-11h3l3 11 2-11h4l-5 17h-4l-3-9-3 9H7z" fill="#2455a8" />
        <path d="m18 19 12-2v11l-12 2z" fill="#fff" stroke="#8eaee0" /><path d="m20 22 8-1M20 26l8-1" stroke="#5b88cc" strokeWidth="1.500" />
      </svg>
    ),
  },
]

function Taskbar() {
  return (
    <div className="relative flex h-10 shrink-0 items-stretch border-t border-[#163c5c] bg-[linear-gradient(90deg,#1d5a8c_0%,#2b7fb4_8%,#3f9fd2_18%,#419fd4_36%,#2d86c8_58%,#2070b8_69%,#1f62a8_70%,#1b5088_74%,#1a4478_79%,#132f58_84%,#102848_92%,#17395c_100%)]">
      <button aria-label="Start" className="flex w-[59px] items-center pl-2">
        <svg width="38" height="38" viewBox="0 0 38 38" aria-hidden="true">
          <defs>
            <radialGradient id="orb" cx=".5" cy=".95" r=".9">
              <stop offset="0" stopColor="#5fd8f8" /><stop offset=".5" stopColor="#22679c" /><stop offset="1" stopColor="#7f9fba" />
            </radialGradient>
          </defs>
          <circle cx="19" cy="19" r="17.500" fill="url(#orb)" stroke="#173c5c" />
          <path d="M11 11c3-2 5-2 8-.5L17.500 18c-3-1.500-5-1.500-8 0z" fill="#ee5a28" />
          <path d="M20.500 11c3 1.500 5 1.500 8 .5L27 19c-3 1-5 1-8-.5z" fill="#8cc63c" />
          <path d="M9 19.500c3-1.500 5-1.500 8 0L15.500 27c-3-1.500-5-1.500-8 0z" fill="#3d9fe0" />
          <path d="M18.500 20c3 1.500 5 1.500 8 .5L25 28c-3 1-5 1-8-.5z" fill="#fbc928" />
        </svg>
      </button>
      <div className="flex gap-0.5">
        {TASKBAR.map((t) => (
          <button
            key={t.name}
            aria-label={t.name}
            className={clsx(
              'flex w-[60px] items-center justify-center',
              t.framed && 'rounded-[3px] border border-[#1c4a70] shadow-[inset_0_0_0_1px_rgba(255,255,255,0.5)]',
              t.framed && (t.active ? 'bg-linear-to-b from-white/80 to-white/50' : 'bg-linear-to-br from-white/50 to-white/15'),
            )}
          >
            {t.icon}
          </button>
        ))}
      </div>
      <div className="ml-auto flex items-center text-white">
        <svg width="7" height="4" viewBox="0 0 7 4" className="mr-3.5" aria-hidden="true"><path d="M0 4h7L3.500 0z" fill="#fff" /></svg>
        <svg width="15" height="11" viewBox="0 0 15 11" className="mr-2.5" aria-hidden="true">
          <path d="M0 9h2v2H0zM3 7h2v4H3zM6 5h2v6H6zM9 3h2v8H9zM12 0h2v11h-2z" fill="#fff" />
        </svg>
        <svg width="16" height="16" viewBox="0 0 16 16" aria-hidden="true">
          <path d="M1 5h2l4-4v12L3 9H1z" fill="#eee" />
          <circle cx="10.500" cy="11" r="4.500" fill="#d9342b" /><path d="m8.500 9 4 4m0-4-4 4" stroke="#fff" strokeWidth="1.400" />
        </svg>
        <div className="w-[86px] pl-1 text-center font-['Open_Sans',sans-serif] text-[11px] leading-[17px]">
          <p>3:42 CH</p>
          <p>10/03/2018</p>
        </div>
        <button aria-label="Hiện màn hình" className="h-full w-3.5 border border-[#5c7a98] bg-linear-to-b from-white/30 to-transparent" />
      </div>
    </div>
  )
}

function Grip() {
  return <span className="h-4 w-1 border-l-2 border-dotted border-[#8aa6cc]" />
}

export default function App() {
  return (
    <div className="relative flex h-screen flex-col overflow-hidden bg-[#cbdbf0] font-['Liberation_Sans',sans-serif] text-[11px] leading-4 text-black">
      <header className="flex h-[22px] shrink-0 items-center gap-[7px] bg-[#6496c8] pr-1.5 font-['Open_Sans',sans-serif] text-[12px] text-white">
        <Logo size={16} />
        <span>MISA SME.NET 2017 R30.1 Standard - CÔNG TY TNHH XÂY DỰNG VÀ CÔNG NGHỆ HUY THÀNH</span>
        <TitleButtons restore />
      </header>
      <div className="relative flex h-[45px] shrink-0 flex-col bg-[#adc7e7] pl-[3px] font-['Open_Sans',sans-serif]">
        <nav className="flex h-[22px] items-center gap-[13px] whitespace-nowrap">
          <Grip />
          <a href="#" className="-ml-[3px]">Tệp</a>
          <a href="#">Danh mục</a>
          <a href="#">Nghiệp vụ</a>
          <a href="#">Hệ thống</a>
          <a href="#">Tiện ích</a>
          <a href="#">Trợ giúp</a>
          <span className="pl-5 text-[12px] font-bold">Đang làm việc trên: Sổ tài chính - CÔNG TY TNHH XÂY DỰNG VÀ CÔNG NGHỆ HUY THÀNH</span>
        </nav>
        <div className="flex h-[22px] items-center">
          <Grip />
          <button className="flex items-center gap-3 pl-2.5">
            <svg width="13" height="15" viewBox="0 0 13 15" aria-hidden="true">
              <path d="M.5.500h12v14H.5z" fill="#fff" stroke="#2f8fc8" />
              <path d="M2 3h2M2 6h2M2 9h2M2 12h2" stroke="#2f8fc8" strokeWidth="2" />
              <path d="M6 3h5M6 6h5M6 9h5M6 12h5" stroke="#5fb0dc" />
            </svg>
            Chọn chi nhánh làm việc
          </button>
          <button className="flex items-center gap-2 pl-3.5">
            <svg width="16" height="16" viewBox="0 0 16 16" aria-hidden="true">
              <circle cx="6.500" cy="6.500" r="5.500" fill="#d6f1fd" stroke="#5fb4e2" strokeWidth="1.500" />
              <path d="m10.500 10.500 4.500 4.500" stroke="#8c86cf" strokeWidth="2.500" />
            </svg>
            Tìm kiếm
          </button>
        </div>
        <a href="#" className="absolute top-[7px] right-[18px] flex items-center gap-0.5 text-[12px] leading-4 font-bold">
          Thông báo
          <svg width="15" height="15" viewBox="0 0 15 15" aria-hidden="true">
            <circle cx="7.500" cy="7.500" r="7.500" fill="#1778d8" />
            <path d="M2 4c2-3 5-3 7-2L7 5l2 2-2 4-3-3-2-1zM10 6l3-1 1 3-3 4z" fill="#6cc6f8" />
          </svg>
        </a>
      </div>
      <div className="flex min-h-0 flex-1 gap-[3px] pt-[3px] pb-[5px] pl-[3px]">
        <Sidebar />
        <Workspace />
      </div>
      <StatusBar />
      <Taskbar />
      <Notice />
      <DialogWindow />
    </div>
  )
}
